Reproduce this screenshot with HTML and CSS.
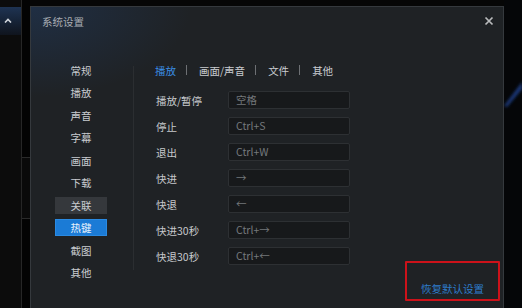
FILE: index.html
```html
<!DOCTYPE html>
<html lang="zh">
<head>
<meta charset="utf-8">
<title>系统设置</title>
<link rel="stylesheet" href="styles.css">
</head>
<body>
<div class="side">
  <div class="side-head">
    <svg class="chev" width="8" height="5" viewBox="0 0 8 5"><path d="M1 4.5 L4 1.5 L7 4.5" fill="none" stroke="#d0d4da" stroke-width="1.6"/></svg>
  </div>
</div>
<div class="gutter"><div class="gutter-box"></div></div>
<div class="dialog">
  <div class="titlebar">
    <span class="title">系统设置</span>
    <svg class="close" width="10" height="10" viewBox="0 0 10 10"><path d="M1.5 1.5 L8.5 8.5 M8.5 1.5 L1.5 8.5" stroke="#b9bbbd" stroke-width="1.7"/></svg>
  </div>
  <div class="main">
    <ul class="nav">
      <li class="nav-item">常规</li>
      <li class="nav-item">播放</li>
      <li class="nav-item">声音</li>
      <li class="nav-item">字幕</li>
      <li class="nav-item">画面</li>
      <li class="nav-item">下载</li>
      <li class="nav-item hover">关联</li>
      <li class="nav-item active">热键</li>
      <li class="nav-item">截图</li>
      <li class="nav-item">其他</li>
    </ul>
    <div class="divider"></div>
    <div class="content">
      <div class="tabs">
        <span class="tab current">播放</span><span class="sep"></span>
        <span class="tab">画面/声音</span><span class="sep"></span>
        <span class="tab">文件</span><span class="sep"></span>
        <span class="tab">其他</span>
      </div>
      <div class="rows">
        <div class="row"><span class="label">播放/暂停</span><span class="key">空格</span></div>
        <div class="row"><span class="label">停止</span><span class="key">Ctrl+S</span></div>
        <div class="row"><span class="label">退出</span><span class="key">Ctrl+W</span></div>
        <div class="row"><span class="label">快进</span><span class="key">→</span></div>
        <div class="row"><span class="label">快退</span><span class="key">←</span></div>
        <div class="row"><span class="label">快进30秒</span><span class="key">Ctrl+→</span></div>
        <div class="row"><span class="label">快退30秒</span><span class="key">Ctrl+←</span></div>
      </div>
    </div>
  </div>
  <div class="reset"><span class="reset-text">恢复默认设置</span></div>
</div>
<div class="right">
  <svg class="streak" width="18" height="308" viewBox="0 0 18 308"><defs><filter id="b"><feGaussianBlur stdDeviation="1.5"/></filter></defs><path d="M0 106 L18 82 L18 89 L3 107 Z" fill="#1a3878" filter="url(#b)"/></svg>
</div>
</body>
</html>
```
FILE: styles.css
```css
html, body {
  margin: 0;
  padding: 0;
}
body {
  width: 522px;
  height: 308px;
  overflow: hidden;
  display: flex;
  background: #060606;
  font-family: "Noto Sans CJK SC", "Noto Sans", sans-serif;
  font-size: 10.5px;
  color: #c8cbce;
}
.side {
  width: 21px;
  flex: none;
  background: #0c0c0c;
  border-right: 1px solid #262626;
}
.side-head {
  margin-top: 7px;
  height: 28px;
  background: linear-gradient(#1e3352, #0f141d);
  display: flex;
  align-items: center;
  padding-left: 4px;
  box-sizing: border-box;
}
.chev { display: block; margin-top: -2px; }
.gutter {
  width: 8px;
  flex: none;
  background: #030303;
}
.gutter-box {
  margin-top: 157px;
  height: 60px;
  border-top: 1px solid #2a2a2a;
  border-bottom: 1px solid #2a2a2a;
  background: #0a0a0a;
}
.dialog {
  position: relative;
  width: 474px;
  height: 310px;
  flex: none;
  margin-top: 6px;
  box-sizing: border-box;
  border: 1px solid #35393d;
  border-bottom: none;
  background:
    radial-gradient(ellipse 160px 90px at 0 0, rgba(32, 62, 105, 0.45), rgba(32, 62, 105, 0) 100%),
    #1f2225;
}
.titlebar {
  height: 45px;
  box-sizing: border-box;
  padding: 7px 9px 0 11px;
  display: flex;
  justify-content: space-between;
  align-items: flex-start;
}
.title {
  line-height: 16px;
  color: #a8adb3;
}
.close { display: block; margin-top: 2px; }
.main {
  display: flex;
  align-items: flex-start;
}
.nav {
  list-style: none;
  margin: 0 0 0 24px;
  padding: 9.5px 0 0;
  width: 52px;
  display: flex;
  flex-direction: column;
  gap: 5.56px;
}
.nav-item {
  height: 17px;
  line-height: 17px;
  text-align: center;
  color: #c9ccd0;
}
.nav-item.hover { background: #35383c; }
.nav-item.active {
  background: #1b7bd6;
  box-shadow: inset 0 0 0 1px #2a8ae2;
  color: #e8f2fc;
}
.divider {
  margin: 14px 0 0 26px;
  width: 1px;
  height: 204px;
  background: #2b2e31;
}
.content {
  padding: 9.5px 0 0 21px;
}
.tabs {
  display: flex;
  align-items: center;
  height: 17px;
  line-height: 17px;
}
.tab { color: #c9ccd0; }
.tab.current { color: #3a8de3; }
.sep {
  width: 1px;
  height: 10px;
  background: #6d7074;
  margin: 0 12px 0 10px;
}
.rows {
  margin-top: 12.5px;
  display: flex;
  flex-direction: column;
  gap: 8px;
  padding-left: 1px;
}
.row {
  display: flex;
  align-items: center;
  height: 18px;
}
.label {
  width: 72px;
  color: #c6c9cc;
}
.key {
  width: 122px;
  height: 18px;
  box-sizing: border-box;
  border: 1px solid #2d3033;
  border-radius: 2px;
  background: #17191b;
  color: #74787c;
  line-height: 16px;
  padding-left: 7px;
}
.reset {
  position: absolute;
  left: 374px;
  top: 254px;
  width: 95px;
  height: 40px;
  box-sizing: border-box;
  border: 2px solid #cc121a;
  border-radius: 1px;
  padding-top: 18px;
  text-align: center;
}
.reset-text {
  line-height: 16px;
  color: #2e7dcb;
}
.right {
  flex: 1;
  background: #050608;
}
.streak { display: block; }
```
